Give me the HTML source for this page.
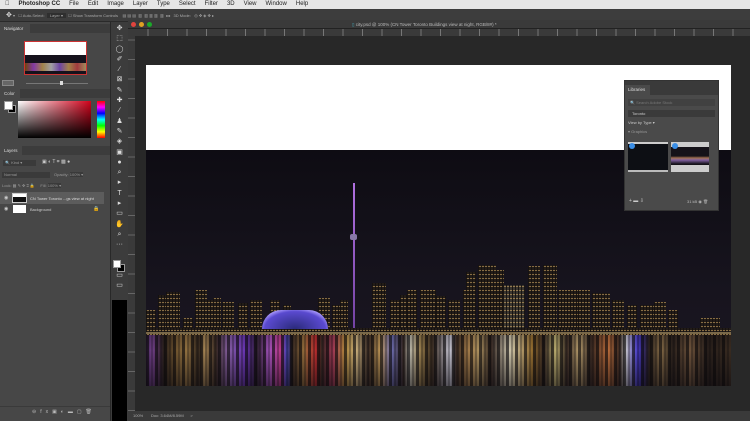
<!DOCTYPE html>
<html><head><meta charset="utf-8"><style>
*{margin:0;padding:0;box-sizing:border-box}
body{width:750px;height:421px;overflow:hidden;background:#282828;font-family:"Liberation Sans",sans-serif;position:relative;font-size:5px;color:#ccc}
.a{position:absolute}
.menu{left:0;top:0;width:750px;height:9px;background:#e6e6e6;color:#222;font-size:6px;line-height:9px}
.menu span{margin-right:9px}
.opt{left:0;top:9px;width:750px;height:13px;background:#3d3d3d;border-bottom:1px solid #2a2a2a;font-size:4px;color:#aaa;line-height:13px}
.lp{left:0;top:22px;width:110px;height:399px;background:#474747}
.hdr{background:#3c3c3c;height:9px;width:110px;left:0}
.tab{background:#474747;height:9px;color:#ddd;font-size:4.5px;line-height:9px;padding-left:4px}
.tb{left:111px;top:22px;width:17px;height:399px;background:#3c3c3c}
.b{position:absolute;bottom:0;background:repeating-linear-gradient(90deg,rgba(20,16,14,.9) 0 1px,transparent 1px 3px),repeating-linear-gradient(0deg,rgba(255,205,120,.45) 0 1px,transparent 1px 4px),#221c18}
</style></head><body>
<div class="a menu"><span style="margin-left:5px">&#63743;</span><b style="margin-right:9px">Photoshop CC</b><span>File</span><span>Edit</span><span>Image</span><span>Layer</span><span>Type</span><span>Select</span><span>Filter</span><span>3D</span><span>View</span><span>Window</span><span>Help</span></div>
<div class="a opt"><span style="margin-left:6px;color:#ddd;font-size:7px">✥</span> ▾ &nbsp; ☐ Auto-Select: &nbsp;<span style="background:#2f2f2f;padding:0 3px">Layer ▾</span> &nbsp;☐ Show Transform Controls &nbsp;&nbsp; ▤ ▤ ▤ &nbsp;▥ &nbsp;▥ ▥ ▥ &nbsp;▥ &nbsp;<b style="color:#ddd">•••</b> &nbsp; 3D Mode: &nbsp; ◎ ✥ ◈ ✥ ▸</div>
<div class="a lp"></div>
<div class="a hdr" style="top:24px"><div class="tab" style="width:30px">Navigator</div></div>
<div class="a" style="left:24px;top:41px;width:63px;height:34px;border:1px solid #c33;background:#15121c">
 <div style="height:13px;background:#fff"></div>
 <div style="height:8px;margin-top:8px;background:linear-gradient(90deg,#a60,#c5f,#fc6,#fff,#a6f,#fc6,#f55,#fd8);opacity:.6"></div></div>
<div class="a" style="left:2px;top:80px;width:12px;height:6px;background:#666;border:1px solid #888"></div>
<div class="a" style="left:26px;top:83px;width:62px;height:1px;background:#777"></div>
<div class="a" style="left:60px;top:81px;width:3px;height:4px;background:#ddd"></div>
<div class="a hdr" style="top:89px"><div class="tab" style="width:20px">Color</div></div>
<div class="a" style="left:8px;top:105px;width:8px;height:8px;background:#000;border:1px solid #999"></div>
<div class="a" style="left:4px;top:101px;width:9px;height:9px;background:#fff;border:1px solid #999"></div>
<div class="a" style="left:18px;top:101px;width:73px;height:37px;background:linear-gradient(to top,#000,rgba(0,0,0,0)),linear-gradient(to right,#fff,#d0021b)"></div>
<div class="a" style="left:97px;top:101px;width:8px;height:37px;background:linear-gradient(#f00,#f0f,#00f,#0ff,#0f0,#ff0,#f00)"></div>
<div class="a hdr" style="top:146px"><div class="tab" style="width:22px">Layers</div></div>
<div class="a" style="left:3px;top:160px;width:33px;height:6px;background:#3a3a3a;font-size:4px;line-height:6px;color:#999;padding-left:2px">🔍 Kind ▾</div>
<div class="a" style="left:42px;top:159px;font-size:5px;color:#ccc">▣ ◐ T ⌗ ▩ ●</div>
<div class="a" style="left:2px;top:172px;width:48px;height:6px;background:#3a3a3a;font-size:4px;line-height:6px;color:#999;padding-left:2px">Normal</div>
<div class="a" style="left:54px;top:172px;font-size:4px;color:#999">Opacity: <span style="background:#3a3a3a">100% ▾</span></div>
<div class="a" style="left:2px;top:183px;font-size:4px;color:#999">Lock: ▩ ✎ ✥ ⌗ 🔒 &nbsp;&nbsp;&nbsp; Fill: <span style="background:#3a3a3a">100% ▾</span></div>
<div class="a" style="left:0;top:192px;width:104px;height:12px;background:#5c5c5c"></div>
<div class="a" style="left:4px;top:195px;font-size:5px;color:#ccc">◉</div>
<div class="a" style="left:12px;top:193px;width:15px;height:10px;background:#111;border:1px solid #ccc"><div style="height:3px;background:#fff"></div></div>
<div class="a" style="left:30px;top:196px;font-size:4px;color:#ddd">CN Tower Toronto ...gs view at night</div>
<div class="a" style="left:4px;top:206px;font-size:5px;color:#ccc">◉</div>
<div class="a" style="left:13px;top:205px;width:13px;height:8px;background:#fff"></div>
<div class="a" style="left:30px;top:207px;font-size:4px;color:#ccc">Background</div>
<div class="a" style="left:93px;top:206px;font-size:5px;color:#999">🔒</div>
<div class="a" style="left:0;top:406px;width:110px;height:1px;background:#3a3a3a"></div>
<div class="a" style="left:32px;top:409px;font-size:5px;color:#bbb;letter-spacing:4px">⊖fx▣◐▬▢🗑</div>
<div class="a tb"></div>
<div class="a" style="left:112px;top:24px;width:15px;height:276px;background:#3c3c3c;color:#ddd;font-size:7px;line-height:10.3px;text-align:center">
✥<br>⬚<br>◯<br>✐<br>∕<br>⊠<br>✎<br>✚<br>∕<br>♟<br>✎<br>◈<br>▣<br>●<br>⌕<br>▸<br>T<br>▸<br>▭<br>✋<br>⌕<br>···<br>&nbsp;<br>&nbsp;<br>▭<br>▭</div>
<div class="a" style="left:113px;top:260px;width:8px;height:8px;background:#fff;border:1px solid #999;z-index:2"></div>
<div class="a" style="left:117px;top:264px;width:8px;height:8px;background:#000;border:1px solid #999;z-index:1"></div>
<div class="a" style="left:112px;top:300px;width:15px;height:121px;background:#000"></div>
<div class="a" style="left:128px;top:20px;width:622px;height:9px;background:#3a3a3a;border-bottom:1px solid #222"></div>
<div class="a" style="left:131px;top:22px;width:5px;height:5px;border-radius:50%;background:#e0443e"></div>
<div class="a" style="left:139px;top:22px;width:5px;height:5px;border-radius:50%;background:#dea123"></div>
<div class="a" style="left:147px;top:22px;width:5px;height:5px;border-radius:50%;background:#1aab29"></div>
<div class="a" style="left:352px;top:21px;font-size:4.5px;color:#bbb;line-height:7px"><span style="color:#4ab">▯</span> city.psd @ 100% (CN Tower Toronto Buildings view at night, RGB/8#) *</div>
<div class="a" style="left:128px;top:29px;width:622px;height:7px;background:#3a3a3a;background-image:repeating-linear-gradient(90deg,#777 0 1px,transparent 1px 19.5px)"></div>
<div class="a" style="left:128px;top:29px;width:7px;height:382px;background:#3a3a3a;background-image:repeating-linear-gradient(0deg,#666 0 1px,transparent 1px 19.5px)"></div>
<div class="a" style="left:146px;top:65px;width:585px;height:85px;background:#fff"></div>
<div class="a" style="left:146px;top:150px;width:585px;height:236px;background:linear-gradient(#0e0c13,#17141e 60%,#1b1722);overflow:hidden">
 <div class="a" style="left:0;top:185px;width:585px;height:51px;background:linear-gradient(90deg,#402a50 0,#8a4aa8 1%,#2a2018 3%,#806030 5%,#b08848 7%,#302418 9%,#c8a060 10%,#3a2a20 12%,#a070c0 14%,#7a3ad8 17%,#302030 19%,#c060e0 21%,#e040a0 23%,#5050e0 24%,#3a2a20 25%,#b08040 27%,#e03030 29%,#3a2a20 30%,#c04060 32%,#d0a040 34%,#f0d090 36%,#3a2a20 38%,#e0b060 40%,#8080d0 42%,#3a2a20 44%,#e0e0d0 45%,#b09050 47%,#403020 49%,#f0f0ff 52%,#3a2a20 53%,#c09050 55%,#d0b070 57%,#3a2a20 59%,#f8f0d0 62%,#f0e0b0 63%,#b08030 66%,#3a2a20 68%,#e0d080 70%,#3a2a20 72%,#e0c080 74%,#3a2a20 76%,#e08040 79%,#3a2a20 81%,#f0f0f0 82%,#5040f0 84%,#2a2018 86%,#a08050 88%,#2a2018 90%,#806040 93%,#2a2018 96%,#403020 100%);opacity:.8"></div>
 <div class="a" style="left:0;top:185px;width:585px;height:51px;background:repeating-linear-gradient(90deg,rgba(10,8,10,.65) 0 3px,transparent 3px 5px,rgba(10,8,10,.3) 5px 7px,transparent 7px 9px),linear-gradient(rgba(10,8,14,.2),transparent 30%,rgba(10,8,14,.55))"></div>
 <div class="a" style="left:207px;top:33px;width:2px;height:152px;background:linear-gradient(#b070e0,#7040a0)"></div>
 <div class="a" style="left:204px;top:84px;width:7px;height:6px;background:#8878a8;border-radius:2px"></div>
</div>
<div class="a" style="left:146px;top:150px;width:585px;height:185px;overflow:hidden">
<div class="b" style="left:0;width:10px;height:25px"></div><div class="b" style="left:12px;width:8px;height:40px"></div><div class="b" style="left:20px;width:14px;height:43px"></div><div class="b" style="left:37px;width:10px;height:17px"></div><div class="b" style="left:49px;width:12px;height:45px"></div><div class="b" style="left:61px;width:10px;height:35px"></div><div class="b" style="left:67px;width:8px;height:37px"></div><div class="b" style="left:76px;width:12px;height:33px"></div><div class="b" style="left:92px;width:10px;height:32px"></div><div class="b" style="left:104px;width:12px;height:35px"></div><div class="b" style="left:124px;width:10px;height:35px"></div><div class="b" style="left:137px;width:8px;height:30px"></div><div class="b" style="left:172px;width:12px;height:37px"></div><div class="b" style="left:186px;width:10px;height:30px"></div><div class="b" style="left:194px;width:8px;height:35px"></div><div class="b" style="left:226px;width:14px;height:52px"></div><div class="b" style="left:244px;width:12px;height:35px"></div><div class="b" style="left:254px;width:8px;height:40px"></div><div class="b" style="left:261px;width:10px;height:45px"></div><div class="b" style="left:274px;width:16px;height:45px"></div><div class="b" style="left:290px;width:10px;height:39px"></div><div class="b" style="left:302px;width:12px;height:35px"></div><div class="b" style="left:317px;width:10px;height:45px"></div><div class="b" style="left:320px;width:10px;height:63px"></div><div class="b" style="left:332px;width:18px;height:70px"></div><div class="b" style="left:350px;width:8px;height:65px"></div><div class="b" style="left:357px;width:22px;height:50px;background-color:#3a3630"></div><div class="b" style="left:382px;width:12px;height:69px"></div><div class="b" style="left:397px;width:14px;height:70px"></div><div class="b" style="left:412px;width:20px;height:45px"></div><div class="b" style="left:432px;width:12px;height:45px"></div><div class="b" style="left:446px;width:18px;height:42px"></div><div class="b" style="left:466px;width:12px;height:35px"></div><div class="b" style="left:481px;width:10px;height:30px"></div><div class="b" style="left:494px;width:14px;height:30px"></div><div class="b" style="left:508px;width:12px;height:33px"></div><div class="b" style="left:522px;width:10px;height:25px"></div><div class="b" style="left:554px;width:20px;height:17px"></div><div class="b" style="left:0;width:585px;height:7px"></div>
<div class="a" style="left:116px;top:160px;width:66px;height:19px;border-radius:33px 33px 0 0;background:radial-gradient(ellipse at 50% 100%,#2a2a7a,#5a4ad0 65%,#b0a0ff 80%,#2a2060 82%)"></div>
<div class="a" style="left:0;top:182px;width:585px;height:2px;background:#a08a60;opacity:.7"></div>
</div>
<div class="a" style="left:624px;top:80px;width:95px;height:131px;background:#4a4a4a;border:1px solid #333">
 <div style="height:4px;background:#3a3a3a"></div>
 <div style="height:10px;background:#3a3a3a"><div style="width:25px;height:10px;background:#4a4a4a;color:#ddd;font-size:4.5px;line-height:10px;padding-left:3px">Libraries</div></div>
 <div style="margin:4px 3px;height:7px;background:#414141;font-size:4px;color:#777;line-height:7px;padding-left:2px">🔍 Search Adobe Stock</div>
 <div style="margin:3px 3px;height:7px;background:#3a3a3a;font-size:4px;color:#ccc;line-height:7px;padding-left:4px">Toronto</div>
 <div style="margin:0 3px;font-size:4px;color:#ccc">View by Type ▾</div>
 <div style="margin:4px 3px 2px;font-size:4px;color:#999">▾ Graphics</div>
 <div style="position:absolute;left:3px;top:61px;width:40px;height:30px;background:#0d0f14;border-top:2px solid #ccc;border-bottom:2px solid #bbb"></div>
 <div style="position:absolute;left:46px;top:61px;width:38px;height:30px;background:linear-gradient(#ccc 0 5px,#151219 5px 14px,#a07050 16px,#8060a0 18px,#151219 22px,#151219 23px,#ccc 23px);"></div>
 <div style="position:absolute;left:4px;top:62px;width:6px;height:6px;border-radius:50%;background:#3a8ee6"></div>
 <div style="position:absolute;left:47px;top:62px;width:6px;height:6px;border-radius:50%;background:#3a8ee6"></div>
 <div style="position:absolute;left:4px;top:117px;font-size:5px;color:#ccc">+ ▬ ⇩</div>
 <div style="position:absolute;left:62px;top:118px;font-size:4px;color:#bbb">31 kB ◉ 🗑</div>
</div>
<div class="a" style="left:128px;top:411px;width:622px;height:10px;background:#3a3a3a;font-size:4px;color:#aaa;line-height:10px;padding-left:5px">100% &nbsp;&nbsp;&nbsp;&nbsp;&nbsp; Doc: 3.64M/8.59M &nbsp;&nbsp;&nbsp;&nbsp; &gt;</div>
</body></html>
